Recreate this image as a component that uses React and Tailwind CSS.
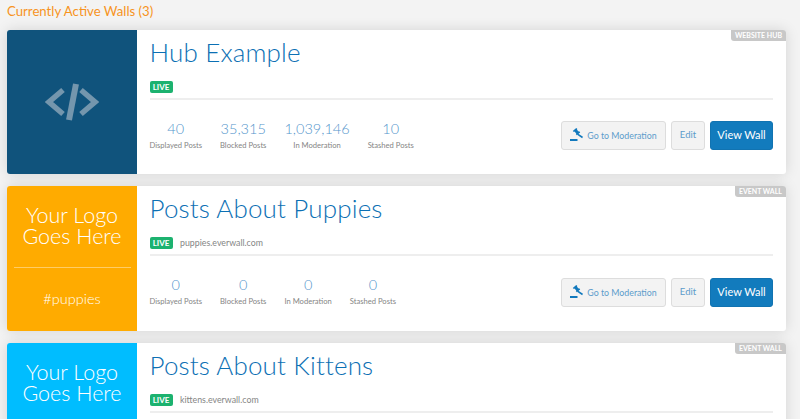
import React from "react";

const Gavel = () => (
  <svg width="13" height="13" viewBox="0 0 13 13" fill="#1279bd" className="-mt-[2px] shrink-0">
    <rect x="0" y="11" width="7.5" height="2" />
    <path d="M2.8 3 L6.2 0 L7.4 1.1 L6.9 1.7 L8.6 3.6 L9.2 3.2 L10.2 4.4 L6.8 7.2 L5.8 6.1 L6.3 5.5 L4.5 3.6 L3.9 4.1 Z" />
    <path d="M8 5.4 L13 8.7 L12.1 10.2 L7.1 6.7 Z" />
  </svg>
);

const Stat = ({ value, label }) => (
  <div className="flex flex-col items-center">
    <div className="text-[14.5px] leading-[18px] font-light text-[#5596cc]">{value}</div>
    <div className="text-[7.6px] leading-[10px] mt-[2px] text-[#858585]">{label}</div>
  </div>
);

const Logo = ({ tag }) => (
  <div className="h-full flex flex-col items-center text-white font-light">
    <div className="mt-[19px] text-[21.5px] leading-[21px] text-center w-full">
      <div>Your Logo</div>
      <div>Goes Here</div>
    </div>
    {tag && <div className="mt-[20px] w-[117px] border-t border-[#ffffff66]" />}
    {tag && <div className="mt-[21px] text-[14.5px] leading-[20px]">{tag}</div>}
  </div>
);

const Card = ({ bg, kind, title, url, stats, children, h, btn }) => (
  <div className={`relative flex bg-white rounded-[3px] shadow-[0_0_14px_rgba(0,0,0,0.13)] ${h}`}>
    <div className={`w-[130px] shrink-0 rounded-l-[3px] ${bg}`}>{children}</div>
    <div className="flex-1 min-w-0 pl-[12.5px] pr-[13px] flex flex-col">
      <h2 className="text-[26px] leading-[30px] font-light text-[#0c70b4] tracking-[0.15px] mt-[7px] mb-[13px]">{title}</h2>
      <div className="flex items-center gap-[7px] h-[14px]">
        <span className="h-[12px] w-[23px] text-center bg-[#1cb26f] rounded-[2px] text-[8px] leading-[12px] font-bold text-white">LIVE</span>
        {url && <span className="text-[8.8px] text-[#858585] ml-[0.5px]">{url}</span>}
      </div>
      <div className="mt-[4px] border-t-2 border-[#eeeeee]" />
      {stats && (
        <div className="flex items-start justify-between mt-[20px]">
          <div className="flex gap-[18px]">
            {stats.map(([v, l]) => (
              <Stat key={l} value={v} label={l} />
            ))}
          </div>
          <div className={`flex items-center gap-[5px] ${btn}`}>
            <button className="h-[29px] w-[105px] flex items-center justify-center gap-[4px] bg-[#f3f3f3] border border-[#dddddd] rounded-[3px] text-[8.8px] text-[#5c9ccb]">
              <Gavel />
              Go to Moderation
            </button>
            <button className="h-[29px] w-[34px] bg-[#f3f3f3] border border-[#dddddd] rounded-[3px] text-[9.5px] text-[#5c9ccb]">Edit</button>
            <button className="h-[29px] w-[63px] bg-[#127bbd] border border-[#1173b1] rounded-[3px] text-[11px] text-white">View Wall</button>
          </div>
        </div>
      )}
    </div>
    <div className="absolute top-0 right-0 h-[11px] px-[4px] bg-[#c8c8c8] rounded-bl-[3px] rounded-tr-[3px] text-[7px] leading-[11px] font-bold text-white">{kind}</div>
  </div>
);

export default function App() {
  return (
    <div className="h-[419px] overflow-hidden bg-[#f3f3f3] font-['Lato','Noto_Sans',sans-serif]">
      <div className="pl-[7px] pr-[14px] pt-[3px]">
        <div className="text-[13.2px] leading-[16px] text-[#f7931e] mb-[11px]">Currently Active Walls (3)</div>
        <div className="flex flex-col gap-[12px]">
          <Card
            bg="bg-[#10537c]"
            kind="WEBSITE HUB"
            title="Hub Example"
            h="h-[144px]"
            btn="mt-[1px]"
            stats={[["40", "Displayed Posts"], ["35,315", "Blocked Posts"], ["1,039,146", "In Moderation"], ["10", "Stashed Posts"]]}
          >
            <div className="h-full flex items-center justify-center">
              <svg width="54" height="38" viewBox="0 0 54 38" fill="none" stroke="#7496ad">
                <path d="M18 7 L4 19 L18 31" strokeWidth="5.5" />
                <path d="M36 7 L50 19 L36 31" strokeWidth="5.5" />
                <path d="M31 1 L24 37" strokeWidth="6" />
              </svg>
            </div>
          </Card>
          <Card
            bg="bg-[#ffab00]"
            kind="EVENT WALL"
            title="Posts About Puppies"
            url="puppies.everwall.com"
            h="h-[145px]"
            btn="mt-[2px]"
            stats={[["0", "Displayed Posts"], ["0", "Blocked Posts"], ["0", "In Moderation"], ["0", "Stashed Posts"]]}
          >
            <Logo tag="#puppies" />
          </Card>
          <Card
            bg="bg-[#00bdff]"
            kind="EVENT WALL"
            title="Posts About Kittens"
            url="kittens.everwall.com"
            h="h-[145px]"
          >
            <Logo />
          </Card>
        </div>
      </div>
    </div>
  );
}
